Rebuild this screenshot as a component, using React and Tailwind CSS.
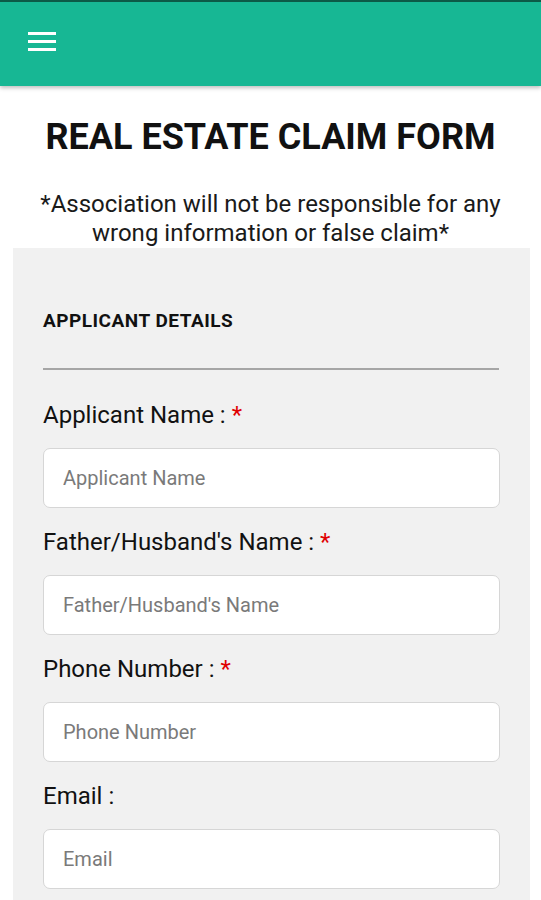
import React from "react";

const fields = [
  { label: "Applicant Name", required: true },
  { label: "Father/Husband's Name", required: true },
  { label: "Phone Number", required: true },
  { label: "Email", required: false },
];

const App = () => {
  return (
    <div className="min-h-screen bg-white font-['Roboto',sans-serif] text-[#111]">
      {/* Top bar */}
      <header className="h-[86px] bg-[#17b794] border-t-2 border-[#0c5a47] shadow-[0_2px_4px_rgba(0,0,0,0.25)] flex items-center px-7">
        <svg width="29" height="22" viewBox="0 0 29 22" className="mt-[-4px]">
          <rect x="0" y="1" width="28" height="3" fill="#fff" />
          <rect x="0" y="9" width="28" height="3" fill="#fff" />
          <rect x="0" y="17" width="28" height="3" fill="#fff" />
        </svg>
      </header>

      <h1 className="mt-[31px] text-center text-[36px] leading-[40px] font-bold">
        REAL ESTATE CLAIM FORM
      </h1>

      <p className="mt-[33px] px-[36px] text-center text-[24px] leading-[29px] text-[#1a1a1a]">
        *Association will not be responsible for any wrong information or false claim*
      </p>

      {/* Form panel */}
      <div className="ml-[13px] mr-[11px] bg-[#f1f1f1] px-[30px] pt-[63px] pb-6">
        <h2 className="text-[19px] leading-[20px] font-bold tracking-[0.5px]">APPLICANT DETAILS</h2>
        <div className="mt-[37px] h-[2px] bg-[#a6a6a6] mr-[1px]" />

        <div className="mt-[31px] flex flex-col gap-[20px]">
          {fields.map((f) => (
            <div key={f.label} className="flex flex-col gap-[19px]">
              <label className="text-[24px] leading-[28px] text-[#111]">
                {f.label} :{" "}
                {f.required && <span className="text-[#e00000]">*</span>}
              </label>
              <input
                placeholder={f.label}
                className="h-[60px] w-full rounded-[7px] border border-[#d6d6d6] bg-white px-[19px] text-[20px] placeholder:text-[#7a7a7a] outline-none"
              />
            </div>
          ))}
        </div>
      </div>
    </div>
  );
};

export default App;
